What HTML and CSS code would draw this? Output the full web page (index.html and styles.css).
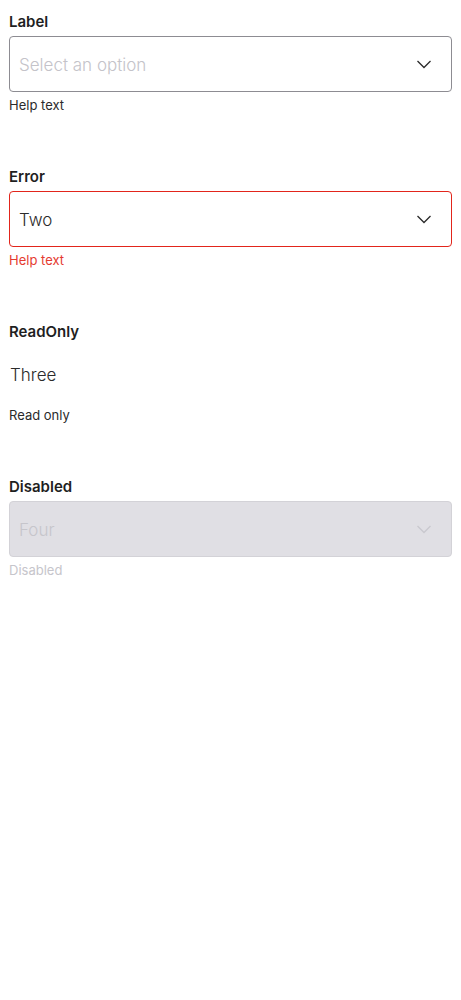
FILE: index.html
```html
<!DOCTYPE html>
<html>
<head>
<meta charset="utf-8">
<link rel="stylesheet" href="styles.css">
</head>
<body>
<div class="page">
  <div class="field">
    <div class="label">Label</div>
    <div class="select">
      <span class="value placeholder">Select an option</span>
      <svg class="chev" width="16" height="9" viewBox="0 0 16 9"><path d="M1.5 1l6.5 6.5 6.5-6.5" fill="none" stroke="currentColor" stroke-width="1.3"/></svg>
    </div>
    <div class="help">Help text</div>
  </div>
  <div class="field error">
    <div class="label">Error</div>
    <div class="select">
      <span class="value">Two</span>
      <svg class="chev" width="16" height="9" viewBox="0 0 16 9"><path d="M1.5 1l6.5 6.5 6.5-6.5" fill="none" stroke="currentColor" stroke-width="1.3"/></svg>
    </div>
    <div class="help">Help text</div>
  </div>
  <div class="field readonly">
    <div class="label">ReadOnly</div>
    <div class="select">
      <span class="value">Three</span>
    </div>
    <div class="help">Read only</div>
  </div>
  <div class="field disabled">
    <div class="label">Disabled</div>
    <div class="select">
      <span class="value">Four</span>
      <svg class="chev" width="16" height="9" viewBox="0 0 16 9"><path d="M1.5 1l6.5 6.5 6.5-6.5" fill="none" stroke="currentColor" stroke-width="1.3"/></svg>
    </div>
    <div class="help">Disabled</div>
  </div>
</div>
</body>
</html>
```
FILE: styles.css
```css
html, body {
  margin: 0;
  padding: 0;
  background: #fff;
}
body {
  font-family: Inter, "Noto Sans", sans-serif;
  color: #1f1f1f;
}
.page {
  padding: 11px 9px 0 9px;
  display: flex;
  flex-direction: column;
  gap: 52px;
}
.field {
  display: flex;
  flex-direction: column;
}
.label {
  font-size: 15px;
  font-weight: 600;
  line-height: 21px;
  height: 20px;
  color: #1f1f1f;
}
.select {
  margin-top: 5px;
  height: 56px;
  box-sizing: border-box;
  border: 1.5px solid #8d8c92;
  border-radius: 4px;
  display: flex;
  align-items: center;
  justify-content: space-between;
  padding: 0 19px 0 9px;
  background: #fff;
}
.value {
  font-size: 17px;
  font-weight: 300;
  line-height: 22px;
  padding-top: 2px;
  color: #2b2b2b;
}
.placeholder {
  color: #c4c3c9;
}
.chev {
  color: #2b2b2b;
  display: block;
}
.help {
  margin-top: 4px;
  font-size: 13px;
  line-height: 19px;
  height: 18px;
  font-weight: 400;
  color: #2b2b2b;
}
.error .select {
  border-color: #e2251b;
}
.error .help {
  color: #e53b30;
}
.readonly .select {
  border-color: transparent;
  padding-left: 0;
}
.disabled .select {
  background: #e0dfe4;
  border-color: #d3d2d7;
}
.disabled .value {
  color: #c6c5cb;
}
.disabled .chev {
  color: #c9c8ce;
}
.disabled .help {
  color: #c6c5cb;
}
```
